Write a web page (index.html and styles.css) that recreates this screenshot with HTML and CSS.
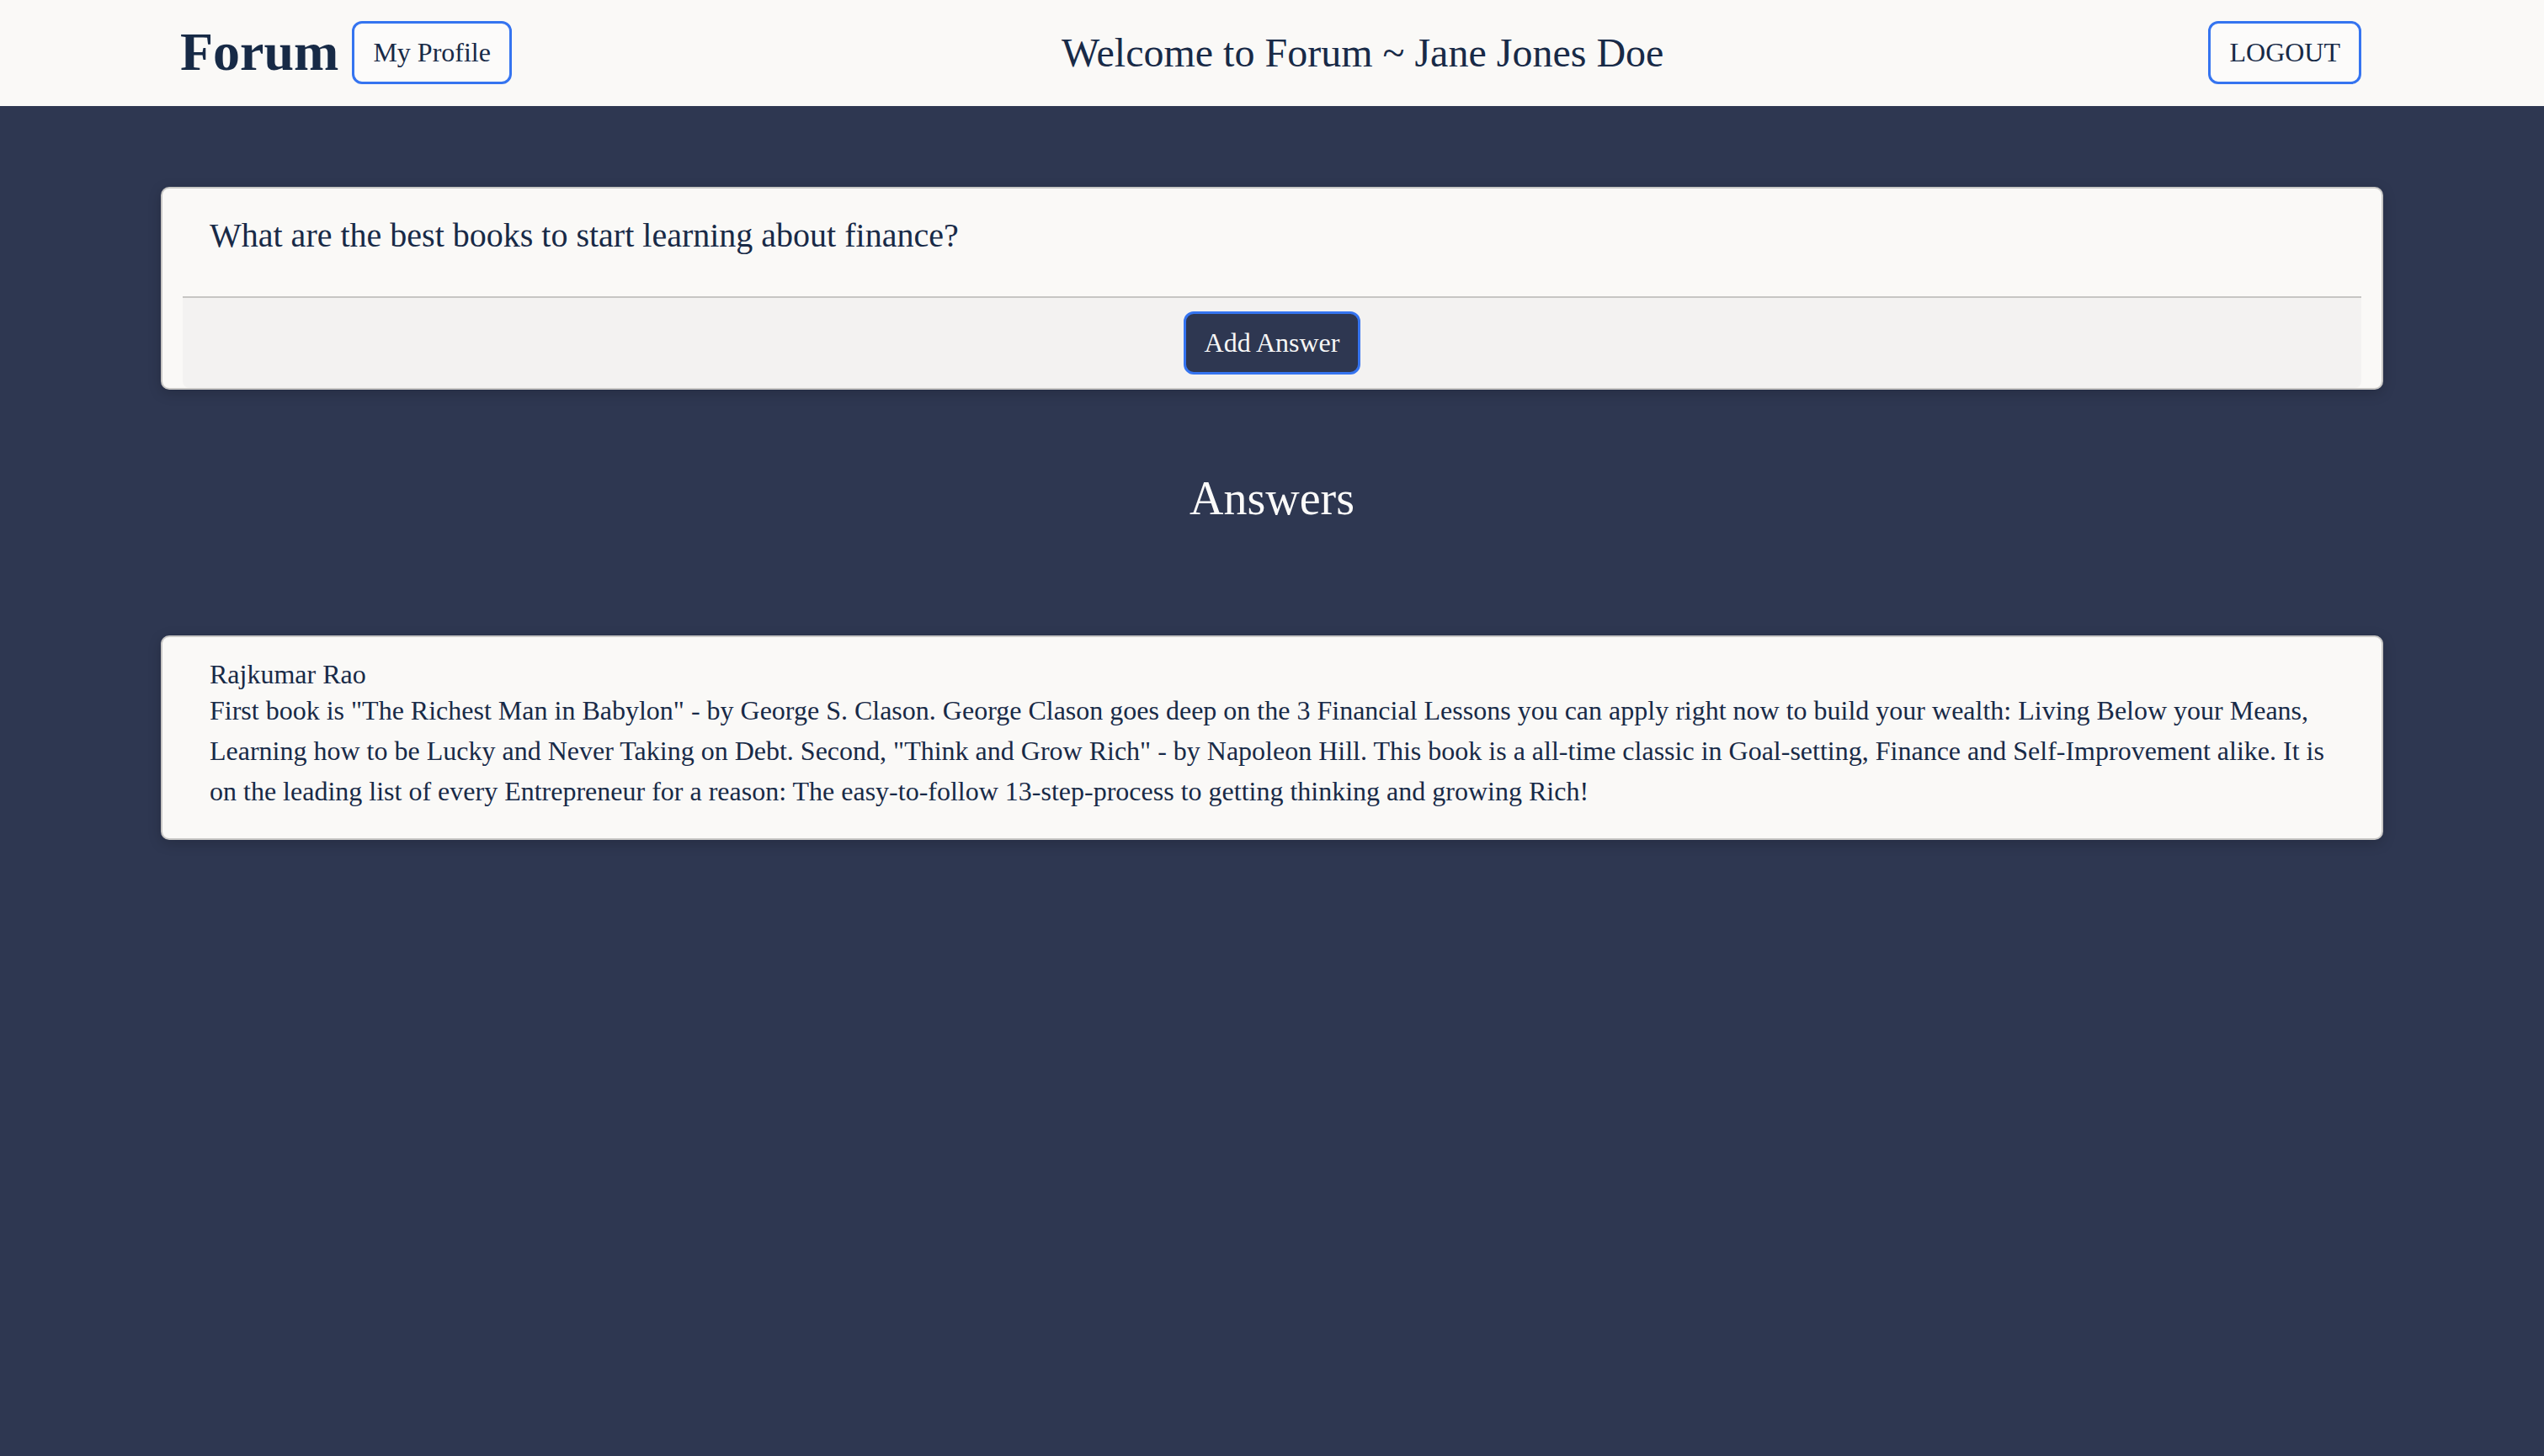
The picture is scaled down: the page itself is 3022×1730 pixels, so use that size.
FILE: index.html
```html
<!DOCTYPE html>
<html lang="en">
<head>
<meta charset="utf-8">
<title>Forum</title>
<link rel="stylesheet" href="styles.css">
</head>
<body>
<header class="topbar">
  <div class="brand">
    <h1 class="logo">Forum</h1>
    <button class="outline-btn">My Profile</button>
  </div>
  <h2 class="welcome">Welcome to Forum ~ Jane Jones Doe</h2>
  <button class="outline-btn">LOGOUT</button>
</header>
<main class="content">
  <section class="card question-card">
    <p class="question">What are the best books to start learning about finance?</p>
    <div class="card-footer">
      <button class="primary-btn">Add Answer</button>
    </div>
  </section>
  <h2 class="answers-title">Answers</h2>
  <section class="card answer-card">
    <div class="answer-body">
      <div class="answer-author">Rajkumar Rao</div>
      <p class="answer-text">First book is "The Richest Man in Babylon" - by George S. Clason. George Clason goes deep on the 3 Financial Lessons you can apply right now to build your wealth: Living Below your Means, Learning how to be Lucky and Never Taking on Debt. Second, "Think and Grow Rich" - by Napoleon Hill. This book is a all-time classic in Goal-setting, Finance and Self-Improvement alike. It is on the leading list of every Entrepreneur for a reason: The easy-to-follow 13-step-process to getting thinking and growing Rich!</p>
    </div>
  </section>
</main>
</body>
</html>
```

FILE: styles.css
```css
html, body {
  margin: 0;
  padding: 0;
}
body {
  background: #2e3751;
  font-family: "Liberation Serif", "Times New Roman", serif;
  color: #182a47;
  min-height: 1730px;
}
.topbar {
  height: 126px;
  box-sizing: border-box;
  background: #faf9f7;
  display: flex;
  align-items: center;
  justify-content: space-between;
  padding: 0 217px 2px 214px;
}
.brand {
  display: flex;
  align-items: center;
  gap: 16px;
}
.logo {
  margin: 0;
  font-size: 64px;
  font-weight: bold;
  line-height: 1.15;
  color: #172a46;
}
.welcome {
  margin: 0 0 0 6px;
  font-size: 48px;
  font-weight: normal;
  color: #182a47;
}
.outline-btn {
  font-family: "Liberation Serif", "Times New Roman", serif;
  font-size: 32px;
  line-height: 37px;
  color: #182a47;
  background: #fcfbfa;
  border: 3px solid #3574f0;
  border-radius: 12px;
  padding: 16px 22px;
  cursor: pointer;
}
.content {
  width: 2640px;
  margin: 0 auto;
  padding-top: 96px;
}
.card {
  background: #faf9f7;
  border: 2px solid #c9c8c6;
  border-radius: 10px;
  padding: 0 24px;
  box-shadow: 0 4px 16px rgba(0, 0, 0, 0.18);
}
.question {
  margin: 0;
  padding: 33px 32px 49px;
  font-size: 40px;
  line-height: 46px;
}
.card-footer {
  background: #f3f2f1;
  border-top: 2px solid #c7c6c4;
  border-radius: 0 0 8px 8px;
  padding: 16px 0;
  display: flex;
  justify-content: center;
}
.primary-btn {
  font-family: "Liberation Serif", "Times New Roman", serif;
  font-size: 32px;
  line-height: 37px;
  color: #f6f6f6;
  background: #2e3751;
  border: 3px solid #3574f0;
  border-radius: 12px;
  padding: 16px 22px;
  cursor: pointer;
}
.answers-title {
  margin: 97px 0 131px;
  text-align: center;
  font-size: 56px;
  font-weight: normal;
  line-height: 64px;
  color: #fbfaf9;
}
.answer-body {
  padding: 26px 32px 32px;
}
.answer-author {
  font-size: 32px;
  line-height: 37px;
}
.answer-text {
  margin: 0;
  font-size: 32px;
  line-height: 48px;
}
```
